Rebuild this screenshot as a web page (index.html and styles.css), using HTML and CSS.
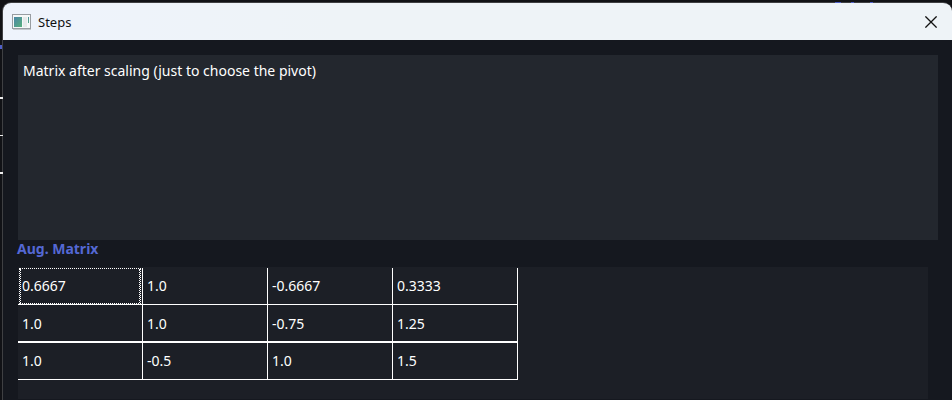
FILE: index.html
```html
<!DOCTYPE html>
<html lang="en">
<head>
<meta charset="utf-8">
<title>Steps</title>
<link rel="stylesheet" href="styles.css">
</head>
<body>
<main class="window">
  <header class="titlebar">
    <svg class="app-icon" width="19" height="16" viewBox="0 0 19 16" aria-hidden="true">
      <defs>
        <linearGradient id="pane" x1="0" y1="0" x2="1" y2="1">
          <stop offset="0" stop-color="#4c86a8"/>
          <stop offset="1" stop-color="#58b07c"/>
        </linearGradient>
      </defs>
      <rect x="0.5" y="0.5" width="18" height="14" fill="#f6f8f8" stroke="#989da2"/>
      <path d="M1 15.5h18" stroke="#c3c8cc"/>
      <rect x="2" y="3" width="8" height="10" fill="url(#pane)"/>
      <rect x="11" y="3" width="4" height="10" fill="#e6eaea"/>
      <rect x="16" y="3" width="1" height="6" fill="url(#pane)"/>
    </svg>
    <h1 class="title">Steps</h1>
    <button class="close" type="button" aria-label="Close">
      <svg width="12" height="12" viewBox="0 0 12 12" aria-hidden="true">
        <path d="M0.4 0.4l11.2 11.2M11.6 0.4L0.4 11.6" fill="none" stroke="#111" stroke-width="1.3"/>
      </svg>
    </button>
  </header>
  <div class="content">
    <textarea class="description" aria-label="Step description" readonly>Matrix after scaling (just to choose the pivot)</textarea>
    <h2 class="label" id="matrix-label">Aug. Matrix</h2>
    <div class="matrix-panel">
      <table class="matrix" aria-labelledby="matrix-label">
        <tbody>
          <tr><td class="focused">0.6667</td><td>1.0</td><td>-0.6667</td><td>0.3333</td></tr>
          <tr class="heavy"><td>1.0</td><td>1.0</td><td>-0.75</td><td>1.25</td></tr>
          <tr><td>1.0</td><td>-0.5</td><td>1.0</td><td>1.5</td></tr>
        </tbody>
      </table>
    </div>
  </div>
</main>
<div class="behind" aria-hidden="true">
  <i class="glyph glyph-left"></i>
  <i class="rule rule-top"></i>
  <i class="rule rule-middle"></i>
  <i class="rule rule-bottom"></i>
  <i class="glyph glyph-a"></i>
  <i class="glyph glyph-b"></i>
  <i class="glyph glyph-c"></i>
</div>
</body>
</html>
```

FILE: styles.css
```css
* {
  box-sizing: border-box;
}

body {
  margin: 0;
  background: #111216;
  color: #fff;
  font: 14px/20px "Noto Sans", "Open Sans", sans-serif;
}

.window {
  display: flex;
  flex-direction: column;
  min-height: calc(100vh - 2px);
  margin: 2px 0 0 2px;
  border: solid #3f4043;
  border-width: 1px 0 0 1px;
  border-radius: 9px 9px 0 0;
  background: #15181f;
  overflow: hidden;
}

.titlebar {
  display: flex;
  align-items: center;
  height: 37px;
  padding-left: 9px;
  background: linear-gradient(90deg, #eef3fc, #eef3f7 35%);
  color: #111;
}

.title {
  flex: 1;
  margin: 0 0 0 7px;
  font-size: 13px;
  font-weight: 400;
}

.close {
  display: grid;
  place-items: center;
  width: 42px;
  height: 37px;
  padding: 0;
  border: 0;
  background: transparent;
}

.content {
  display: flex;
  flex: 1;
  flex-direction: column;
  padding: 15px 14px 1px 15px;
}

.description {
  display: block;
  width: 100%;
  height: 185px;
  padding: 6px 5px;
  border: 0;
  outline: 0;
  resize: none;
  background: #23272e;
  color: inherit;
  font: inherit;
}

.label {
  margin: 0 0 10px -1px;
  color: #5468d4;
  font-size: 14px;
  line-height: 17px;
}

.matrix-panel {
  flex: 1;
  margin-right: 10px;
  padding-top: 1px;
  background: #1c1f26;
}

.matrix {
  width: 500px;
  border-spacing: 0;
  table-layout: fixed;
}

.matrix td {
  height: 37px;
  padding: 0 4px;
  border: solid #fff;
  border-width: 0 1px 1px 0;
}

.matrix .heavy td {
  height: 38px;
  padding-top: 2px;
  border-bottom-width: 2px;
}

.matrix .focused {
  position: relative;
}

.focused::before,
.focused::after {
  content: "";
  position: absolute;
  inset: 0 1px;
  border: 1px dotted #fff;
}

.focused::after {
  inset: 1px 2px;
  border-width: 0 1px;
}

.behind {
  position: absolute;
  inset: 0;
  pointer-events: none;
}

.rule,
.glyph {
  position: absolute;
  left: 0;
  width: 3px;
  height: 2px;
  background: #eee;
}

.rule-top {
  top: 97px;
}

.rule-middle {
  top: 135px;
  height: 1px;
}

.rule-bottom {
  top: 172px;
}

.glyph {
  top: 2px;
  height: 1px;
  background: #5060c8;
}

.glyph-left {
  top: 45px;
  width: 2px;
  height: 4px;
}

.glyph-a {
  left: 835px;
  width: 6px;
}

.glyph-b {
  left: 851px;
}

.glyph-c {
  left: 870px;
}
```
